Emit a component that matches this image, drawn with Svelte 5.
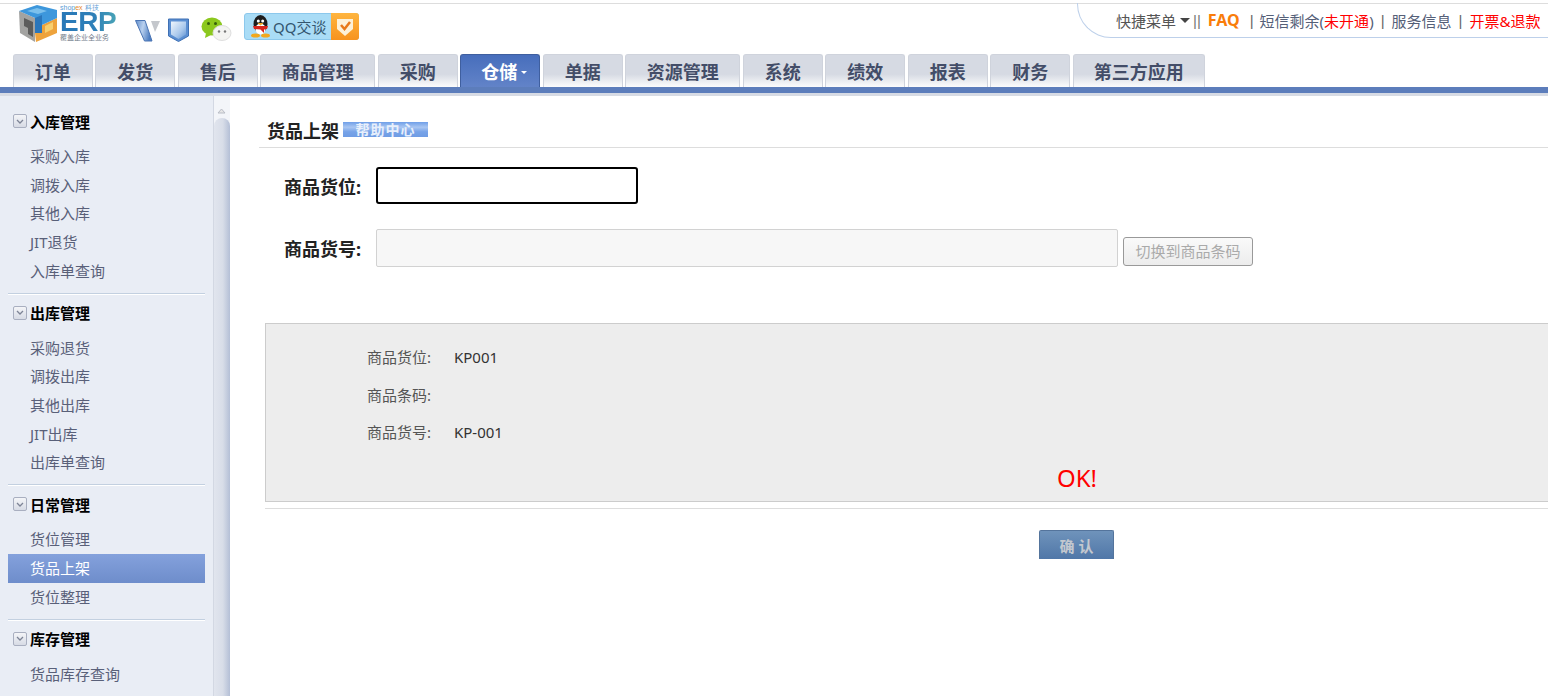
<script>
	const tabs = ['订单', '发货', '售后', '商品管理', '采购', '仓储', '单据', '资源管理', '系统', '绩效', '报表', '财务', '第三方应用'];
	const groups = [
		{ title: '入库管理', items: ['采购入库', '调拨入库', '其他入库', 'JIT退货', '入库单查询'] },
		{ title: '出库管理', items: ['采购退货', '调拨出库', '其他出库', 'JIT出库', '出库单查询'] },
		{ title: '日常管理', items: ['货位管理', '货品上架', '货位整理'] },
		{ title: '库存管理', items: ['货品库存查询', '库存变动查询'] }
	];
	const infos = [
		{ label: '商品货位:', value: 'KP001' },
		{ label: '商品条码:', value: '' },
		{ label: '商品货号:', value: 'KP-001' }
	];
</script>

<div class="page">
	<header>
		<div class="logo">
			<svg width="38" height="37" viewBox="0 0 38 37">
				<path d="M0 6 L16 13 L16 37 L1 28 Z" fill="#a3a3a1" />
				<path d="M5 13 L14 17 L14 32 L9 29 L9 23 L5 21 Z" fill="#5c5c5b" />
				<path d="M23 20 L38 13 L38 28 L17 37 L16 28 L23 26 Z" fill="#eea33c" />
				<path d="M26 21 L34 17 L34 24 L26 28 Z" fill="#f8cf6e" />
				<path d="M0 6 L18 0 L38 5 L38 13 L23 20 L23 28 L16 28 L16 13 Z" fill="#3d97dc" />
				<path d="M16 13 L23 10 L23 28 L16 28 Z" fill="#2a76bb" />
				<path d="M8 6 L18 3 L28 6 L19 9 Z" fill="#7cc0ec" />
			</svg>
			<div class="brand">
				<span class="shop">shop<i>ex</i> 科技</span>
				<span class="erp">ERP</span>
				<span class="slogan">覆盖企业全业务</span>
			</div>
		</div>
		<svg class="ico-v" width="26" height="24" viewBox="0 0 26 24">
			<defs>
				<linearGradient id="vg" x1="0" y1="0" x2="1" y2="0.300">
					<stop offset="0" stop-color="#5f8ccb" />
					<stop offset="0.500" stop-color="#b9d0ee" />
					<stop offset="1" stop-color="#4f7fc2" />
				</linearGradient>
			</defs>
			<path d="M0.500 2.500 L10 2.500 L17 23 L9.500 23 Z" fill="url(#vg)" stroke="#4a74b4" />
			<path d="M16 3 L25 3 L20 14 Z" fill="#c4c7cc" />
		</svg>
		<svg class="ico-shield" width="21" height="24" viewBox="0 0 21 24">
			<defs>
				<linearGradient id="sg" x1="0" y1="0" x2="1" y2="1">
					<stop offset="0" stop-color="#f0f6fc" />
					<stop offset="0.600" stop-color="#a9c8ec" />
					<stop offset="1" stop-color="#5b8fd2" />
				</linearGradient>
			</defs>
			<path d="M0.500 1 L20.500 1 L20.500 18 L10.500 23.500 L0.500 18 Z" fill="#5b8fd2" stroke="#3f70b4" />
			<path d="M3 3.500 L18 3.500 L18 16.500 L10.500 21 L3 16.500 Z" fill="url(#sg)" />
		</svg>
		<svg class="ico-wx" width="31" height="25" viewBox="0 0 31 25">
			<ellipse cx="11" cy="9.500" rx="10.500" ry="9" fill="#8cc81e" />
			<path d="M5 16 L4 21 L10 18 Z" fill="#8cc81e" />
			<circle cx="7.500" cy="6.500" r="1.500" fill="#35600c" />
			<circle cx="14.500" cy="6.500" r="1.500" fill="#35600c" />
			<ellipse cx="21" cy="16" rx="9" ry="7.500" fill="#f4f4f2" stroke="#dedede" />
			<circle cx="18" cy="14.500" r="1.200" fill="#777" />
			<circle cx="24" cy="14.500" r="1.200" fill="#777" />
		</svg>
		<div class="qq">
			<svg width="21" height="23" viewBox="0 0 21 23">
				<ellipse cx="10.500" cy="9" rx="7" ry="9" fill="#1d1d1d" />
				<ellipse cx="10.500" cy="14" rx="5" ry="5.500" fill="#fff" />
				<circle cx="8.300" cy="6" r="1.500" fill="#fff" />
				<circle cx="12.700" cy="6" r="1.500" fill="#fff" />
				<path d="M7.500 8 L13.500 8 L10.500 10.500 Z" fill="#f2a81d" />
				<path d="M3 11 L18 11 L17 14 L14 14.500 L14 18 L10.500 14.500 L4 14 Z" fill="#d8251c" />
				<ellipse cx="5.500" cy="20.500" rx="4.500" ry="2" fill="#f2a81d" />
				<ellipse cx="15.500" cy="20.500" rx="4.500" ry="2" fill="#f2a81d" />
			</svg>
			<span>QQ交谈</span>
			<div class="qq-check">
				<svg width="18" height="20" viewBox="0 0 18 20">
					<path d="M1 2 L17 2 L17 12 L9 19 L1 12 Z" fill="#fdf1d8" />
					<path d="M5 8 L8.500 12 L14 5" fill="none" stroke="#e8791a" stroke-width="2.500" />
				</svg>
			</div>
		</div>
		<div class="quick">
			<span>快捷菜单</span><i class="caret"></i><span class="bars">||</span>
			<b class="faq">FAQ</b>
			<span class="sep wide">|</span>
			<span class="link">短信剩余(<em>未开通</em>)</span>
			<span class="sep">|</span>
			<span class="link">服务信息</span>
			<span class="sep">|</span>
			<em>开票&amp;退款</em>
		</div>
	</header>

	<nav class="tabs">
		{#each tabs as tab}
			<div class="tab" class:on={tab === '仓储'} class:long={tab.length === 4} class:xlong={tab.length === 5}>
				{tab}{#if tab === '仓储'}<i></i>{/if}
			</div>
		{/each}
	</nav>
	<div class="bar"></div>

	<div class="body">
		<aside>
			<div class="menu">
				{#each groups as group, g}
					<section class:first={g === 0}>
						<h3>
							<span class="fold">
								<svg width="8" height="5" viewBox="0 0 8 5"><path d="M1 1 L4 4 L7 1" fill="none" stroke="#7d8496" stroke-width="1.300" /></svg>
							</span>
							{group.title}
						</h3>
						{#each group.items as item}
							<div class="item" class:active={item === '货品上架'}>{item}</div>
						{/each}
					</section>
				{/each}
			</div>
			<div class="scroll">
				<svg width="9" height="6" viewBox="0 0 9 6"><path d="M1 5 L4.500 1 L8 5 Z" fill="#e6e6e6" stroke="#b9bdc6" /></svg>
				<div class="thumb"></div>
			</div>
		</aside>

		<main>
			<div class="title">
				<h2>货品上架</h2>
				<span class="help">帮助中心</span>
			</div>

			<div class="row one">
				<label for="loc">商品货位:</label>
				<div id="loc" class="input focus"></div>
			</div>
			<div class="row two">
				<label for="sku">商品货号:</label>
				<div id="sku" class="input off"></div>
				<button>切换到商品条码</button>
			</div>

			<div class="panel">
				{#each infos as info}
					<div class="info">
						<span class="k">{info.label}</span>
						<span class="v">{info.value}</span>
					</div>
				{/each}
				<div class="ok">OK!</div>
			</div>
			<div class="rule"></div>
			<div class="actions"><button class="confirm">确 认</button></div>
		</main>
	</div>
</div>

<style>
:global(body) {
	margin: 0;
	overflow: hidden;
	background: #fff;
}
.page {
	height: 696px;
	overflow: hidden;
	font-family: "Noto Sans", "Noto Sans CJK SC", sans-serif;
	font-size: 15px;
	color: #333;
}
header {
	display: flex;
	align-items: flex-start;
	height: 50px;
	border-top: 1px solid #ddd;
	margin-top: 3px;
	box-sizing: border-box;
}
.logo {
	display: flex;
	margin: 1px 0 0 19px;
	width: 116px;
}
.brand {
	display: flex;
	flex-direction: column;
	margin: 0 0 0 3px;
	width: 58px;
}
.shop {
	font: 7px/6px "Liberation Sans", sans-serif;
	color: #5a9bd5;
	height: 6px;
}
.shop i {
	color: #e8872a;
	font-style: normal;
}
.erp {
	font: 700 28px/22px "Liberation Sans", sans-serif;
	letter-spacing: -0.5px;
	height: 23px;
	background: linear-gradient(90deg, #2878b8, #2f80b8 60%, #4ba6b6);
	-webkit-background-clip: text;
	background-clip: text;
	color: transparent;
}
.slogan {
	font-size: 7px;
	line-height: 8px;
	color: #6f7b88;
	white-space: nowrap;
}
.ico-v {
	margin: 14px 0 0 0;
}
.ico-shield {
	margin: 14px 0 0 7px;
}
.ico-wx {
	margin: 13px 0 0 12px;
}
.qq {
	display: flex;
	align-items: center;
	margin: 9px 0 0 12px;
	width: 115px;
	height: 27px;
	box-sizing: border-box;
	border: 1px solid #8cc8ec;
	border-radius: 3px;
	background: #a9dcf6;
	padding-left: 5px;
	font-size: 15px;
	color: #34566f;
}
.qq span {
	margin-left: 2px;
	white-space: nowrap;
}
.qq-check {
	display: flex;
	align-items: center;
	justify-content: center;
	margin-left: auto;
	width: 28px;
	height: 27px;
	margin-right: -1px;
	background: linear-gradient(#ffb53f, #f7931e);
	border-radius: 0 3px 3px 0;
}
.quick {
	display: flex;
	align-items: center;
	margin-left: auto;
	width: 471px;
	height: 35px;
	box-sizing: border-box;
	margin-top: -1px;
	padding: 0 0 0 38px;
	border: 1px solid #bdd0ea;
	border-width: 0 0 1px 1px;
	border-bottom-left-radius: 34px;
	white-space: nowrap;
	color: #555;
}
.caret {
	width: 0;
	height: 0;
	margin: 0 3px 0 4px;
	border: 5px solid transparent;
	border-top-color: #444;
	border-bottom: 0;
}
.bars {
	font-family: "Liberation Sans", sans-serif;
	color: #777;
	margin-right: 7px;
}
.faq {
	font-size: 16px;
	color: #f97d0b;
}
.sep {
	font-family: "Liberation Sans", sans-serif;
	color: #666;
	margin: 0 7px 0 7px;
}
.sep.wide {
	margin: 0 6px 0 10px;
}
.link {
	color: #556078;
}
em {
	font-style: normal;
	color: #f00;
}
.tabs {
	display: flex;
	gap: 2.500px;
	height: 34px;
	padding: 1px 0 0 12.700px;
	box-sizing: border-box;
}
.tab {
	display: flex;
	align-items: center;
	justify-content: center;
	width: 80px;
	height: 33px;
	box-sizing: border-box;
	border: 1px solid #cfd3dc;
	border-bottom: 0;
	border-radius: 3px 3px 0 0;
	background: linear-gradient(#d6dae3 0, #d6dae3 60%, #eef0f3 85%, #fbfcfc 100%);
	font-size: 18px;
	font-weight: 700;
	color: #434d68;
}
.tab.long {
	width: 115px;
}
.tab.xlong {
	width: 132px;
}
.tab.on {
	padding-left: 8px;
	background: linear-gradient(#476ebc, #6283c8);
	border-color: #3f5f9f;
	color: #fff;
}
.tab.on i {
	width: 0;
	height: 0;
	margin: 3px 0 0 4px;
	border: 3px solid transparent;
	border-top-color: #fff;
	border-bottom: 0;
}
.bar {
	height: 6px;
	background: #5c7dbb;
	border-bottom: 3px solid #d7dbe4;
}
.body {
	display: flex;
	height: 600px;
}
aside {
	display: flex;
	flex: none;
	width: 230px;
}
.menu {
	width: 214px;
	box-sizing: border-box;
	padding: 0 8px;
	background: #e9edf5;
	border-right: 1px solid #d3d8e3;
	overflow: hidden;
}
section {
	border-top: 1px solid #c3d0e0;
	box-shadow: inset 0 1px 0 #fff;
	margin: 0 0 7.300px;
}
section.first {
	border-top: 0;
	box-shadow: none;
	padding-top: 6px;
}
h3 {
	display: flex;
	align-items: center;
	gap: 3px;
	height: 40px;
	box-sizing: border-box;
	padding-bottom: 2px;
	margin: 0;
	font-size: 15px;
	font-weight: 700;
	color: #000;
}
.fold {
	display: flex;
	align-items: center;
	justify-content: center;
	width: 14px;
	height: 14px;
	box-sizing: border-box;
	margin-left: 5px;
	border: 1px solid #a9afc0;
	border-radius: 2px;
	background: linear-gradient(#f4f5f8, #d7dbe5);
}
.item {
	height: 28.700px;
	line-height: 28.700px;
	padding-left: 22px;
	color: #596079;
}
.item.active {
	background: linear-gradient(#84a1dc, #6e8dcb);
	color: #fff;
}
.scroll {
	display: flex;
	flex-direction: column;
	flex: 1;
	background: #f3f5f9;
}
.scroll svg {
	margin: 12px 0 0 3px;
}
.thumb {
	flex: 1;
	margin-top: 4px;
	border-radius: 8px 8px 0 0;
	background: linear-gradient(90deg, #e1e5ee 0, #d8dde8 55%, #b4bfd6 100%);
}
main {
	flex: 1;
	min-width: 0;
}
.title {
	display: flex;
	align-items: flex-start;
	height: 52px;
	box-sizing: border-box;
	margin-left: 29px;
	padding: 25px 0 0 8px;
	border-bottom: 1px solid #ddd;
}
h2 {
	margin: 0;
	font-size: 18px;
	line-height: 20px;
	font-weight: 700;
	color: #222;
}
.help {
	width: 85px;
	height: 15px;
	margin: 1px 0 0 4px;
	background: linear-gradient(#6f9fe8 0, #a9c6f2 35%, #77a3e8 65%, #6f9ce4 100%);
	color: #e8f0fc;
	font-size: 14px;
	font-weight: 700;
	letter-spacing: 1px;
	line-height: 15px;
	text-align: center;
}
.row {
	display: flex;
	align-items: flex-start;
}
.row.one {
	height: 37px;
	margin-top: 19px;
}
.row.two {
	height: 38px;
	margin-top: 25px;
}
label {
	width: 146px;
	box-sizing: border-box;
	padding-left: 54px;
	font-size: 18px;
	font-weight: 700;
	line-height: 41px;
	color: #222;
}
.input {
	box-sizing: border-box;
}
.input.focus {
	width: 262px;
	height: 37px;
	border: 2px solid #000;
	border-radius: 3px;
}
.input.off {
	width: 742px;
	height: 38px;
	border: 1px solid #d2d2d2;
	border-radius: 2px;
	background: #f7f7f7;
}
.row button {
	width: 130px;
	height: 29px;
	margin: 8px 0 0 5px;
	border: 1px solid #999;
	border-radius: 3px;
	background: linear-gradient(#fafafa, #ececec);
	font: inherit;
	color: #aaa;
	padding: 0 0 2px;
}
.panel {
	height: 179px;
	box-sizing: border-box;
	margin: 56px -2px 0 35px;
	padding: 15px 0 0 101px;
	background: #ededed;
	border: 1px solid #ccc;
}
.info {
	display: flex;
	height: 37.500px;
	line-height: 37.500px;
}
.k {
	width: 87px;
	color: #555;
}
.v {
	color: #333;
}
.ok {
	margin: 10px 0 0 690px;
	font-size: 24px;
	line-height: 32px;
	color: #f00;
}
.rule {
	height: 1px;
	margin: 6px 0 0 35px;
	background: #ddd;
}
.actions {
	padding: 21px 0 0 809px;
}
.confirm {
	display: block;
	width: 75px;
	height: 29px;
	padding: 0;
	border: 1px solid #54749c;
	border-bottom: 0;
	border-radius: 2px 2px 0 0;
	background: linear-gradient(#6f93bb, #5077a8);
	font: inherit;
	font-weight: 700;
	color: #c3c8cf;
}
</style>
